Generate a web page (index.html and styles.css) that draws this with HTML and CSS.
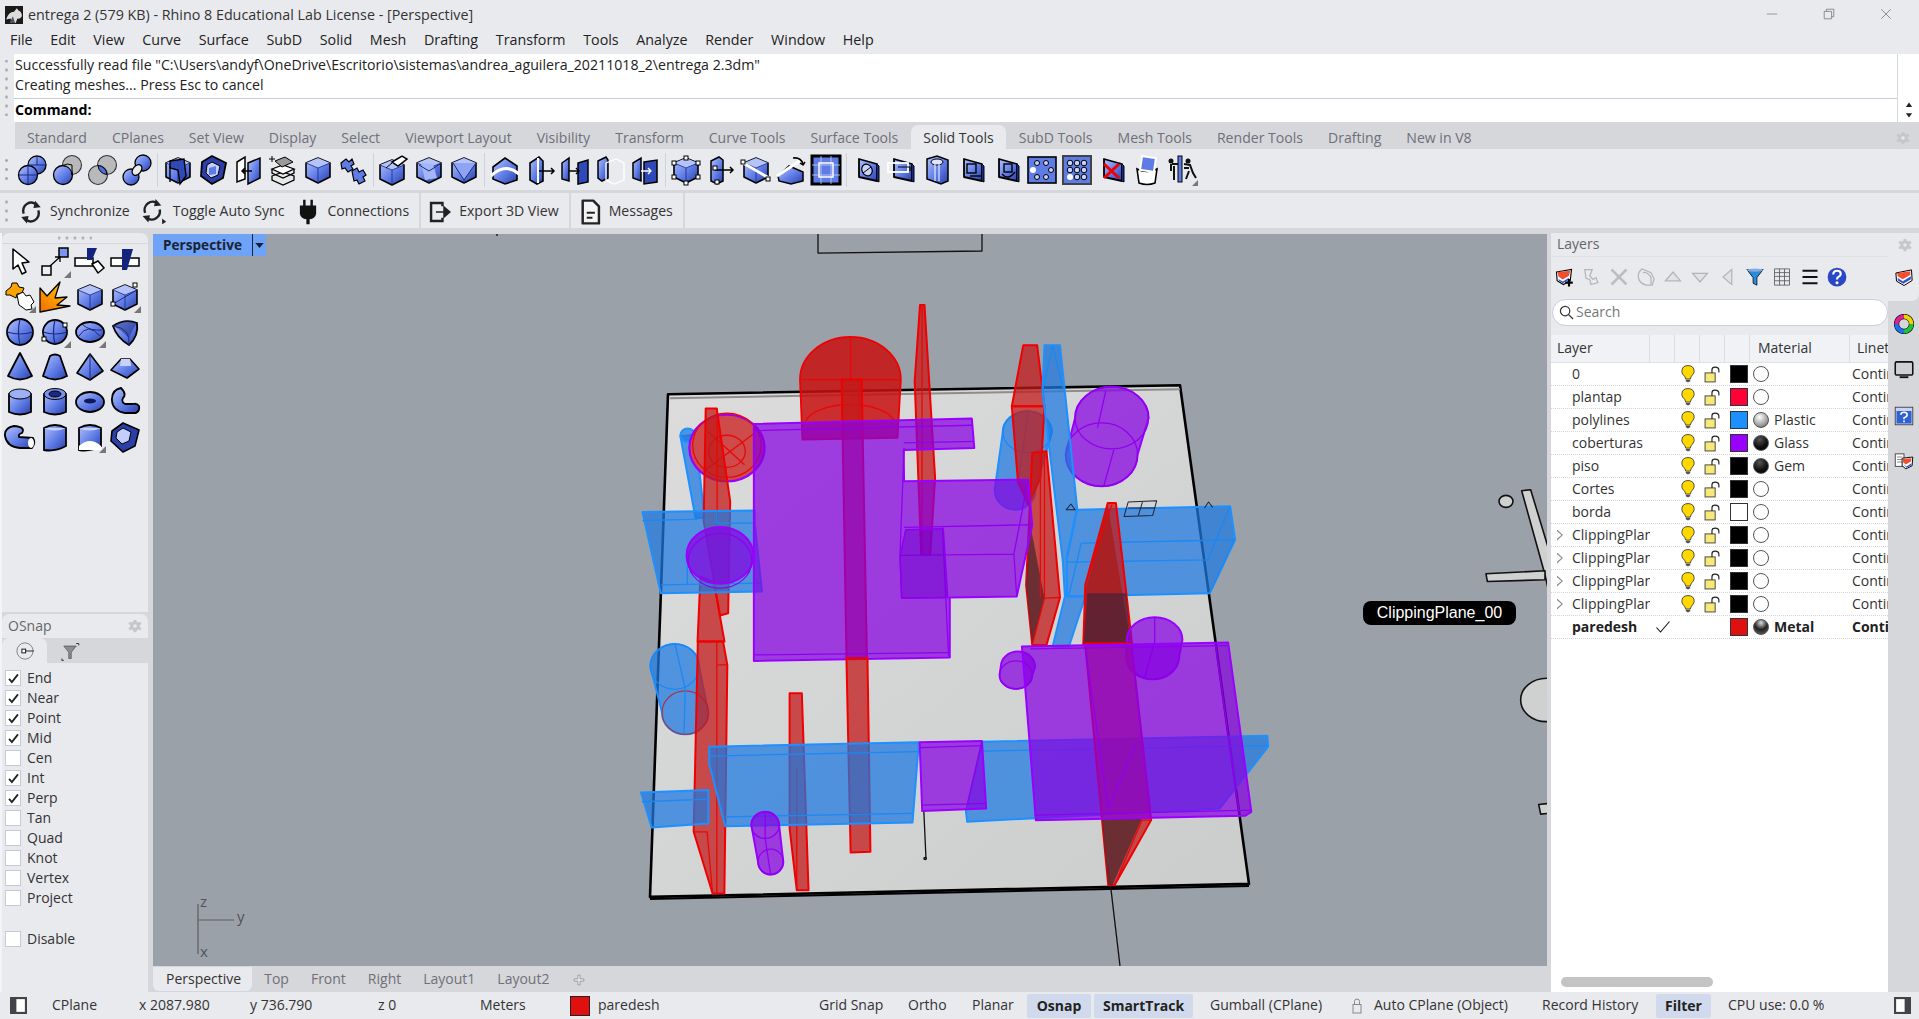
FILE: index.html
```html
<!DOCTYPE html>
<html lang="en">
<head>
<meta charset="utf-8">
<title>entrega 2 - Rhino 8</title>
<link rel="stylesheet" href="styles.css">
</head>
<body>
<svg class="sprite" xmlns="http://www.w3.org/2000/svg">
<defs>
<linearGradient id="bl" x1="0" y1="0" x2="1" y2="1"><stop offset="0" stop-color="#b4c3fa"/><stop offset=".55" stop-color="#5f7ce6"/><stop offset="1" stop-color="#2a40a8"/></linearGradient>
<linearGradient id="or" x1="1" y1="0" x2="0" y2="1"><stop offset="0" stop-color="#ffd400"/><stop offset="1" stop-color="#f56a00"/></linearGradient>
<g id="box"><path d="M16 4 28 9V23L16 29 4 23V9Z" fill="url(#bl)" stroke="#000" stroke-width="1.6" stroke-linejoin="round"/><path d="M4 9 16 14 28 9 16 4Z" fill="#b4c3fa"/><path d="M4 9 16 14 28 9M16 14V29" fill="none" stroke="#1b2a80" stroke-width=".8"/></g>
<g id="flat"><path d="M8 5 26 10V27L8 23Z" fill="url(#bl)" stroke="#000" stroke-width="1.8" stroke-linejoin="round"/><path d="M26 10 28 12V28L26 27" fill="#1b2a80" stroke="#000"/></g>
</defs>
<symbol id="s-union" viewBox="0 0 32 32"><circle cx="21" cy="11" r="9" fill="url(#bl)" stroke="#000" stroke-width="1.3"/><circle cx="12" cy="21" r="9.5" fill="url(#bl)" stroke="#000" stroke-width="1.3"/><path d="M3 21H21M12 11.500V30.500" stroke="#1b2a80" fill="none"/><path d="M21 2V11M12 11H30" stroke="#1b2a80" fill="none"/></symbol>
<symbol id="s-diff" viewBox="0 0 32 32"><circle cx="21" cy="11" r="9.500" fill="#b9b9b9" stroke="#333" stroke-width="1.100"/><circle cx="12" cy="21" r="9.500" fill="url(#bl)" stroke="#000" stroke-width="1.300"/><path d="M21 11A9.500 9.500 0 0 0 12 11.500 9.500 9.500 0 0 1 21 21Z" fill="#b9b9b9" stroke="#000"/></symbol>
<symbol id="s-int" viewBox="0 0 32 32"><circle cx="21" cy="11" r="9.500" fill="#b9b9b9" stroke="#333" stroke-width="1.100"/><circle cx="12" cy="21" r="9.500" fill="#b9b9b9" stroke="#333" stroke-width="1.100"/><path d="M12 11.500A9.500 9.500 0 0 1 21 20.500 9.500 9.500 0 0 1 12 11.500Z" fill="#4f6ce0" stroke="#000"/></symbol>
<symbol id="s-split" viewBox="0 0 32 32"><circle cx="22" cy="9" r="8" fill="url(#bl)" stroke="#000" stroke-width="1.300"/><circle cx="10" cy="23" r="8" fill="url(#bl)" stroke="#000" stroke-width="1.300"/><ellipse cx="16" cy="16" rx="4" ry="6" transform="rotate(40 16 16)" fill="#e9eaee" stroke="#000" stroke-width="1.300"/></symbol>
<symbol id="s-rail" viewBox="0 0 32 32"><use href="#box"/><path d="M8 7 22 5 24 22 18 30 16 16 8 14Z" fill="#2f49b8" stroke="#000" stroke-width="1.400"/><path d="M8 12V28" stroke="#000" stroke-width="1.400"/></symbol>
<symbol id="s-hex" viewBox="0 0 32 32"><path d="M15 2 29 9 26 24 15 30 4 22 5 8Z" fill="#2a40a8" stroke="#000" stroke-width="1.800"/><path d="M15 8 23 12 21 21 14 24 9 19 10 11Z" fill="#c3cffa" stroke="#000"/><path d="M12 14 19 12 19 20 12 21Z" fill="#5f7ce6"/></symbol>
<symbol id="s-cut" viewBox="0 0 32 32"><path d="M5 8 13 3V25L5 28Z" fill="#fff" stroke="#000" stroke-width="1.500"/><path d="M16 9 28 4V24L16 30Z" fill="url(#bl)" stroke="#000" stroke-width="1.500"/><path d="M20 17H10M13 14 10 17 13 20" fill="none" stroke="#000" stroke-width="1.500"/></symbol>
<symbol id="s-stack" viewBox="0 0 32 32"><path d="M5 22 16 18 27 22 27 26 16 31 5 26Z" fill="#e8e8e8" stroke="#000" stroke-width="1.300"/><path d="M5 15 16 11 27 15 16 20Z" fill="#fff" stroke="#000" stroke-width="1.300"/><path d="M5 15V19L16 24 27 19V15" fill="none" stroke="#000" stroke-width="1.300"/><path d="M8 7 18 3 26 8 15 13Z" fill="#999" stroke="#000"/><path d="M5 2V8M2 5H8" stroke="#000"/></symbol>
<symbol id="s-box" viewBox="0 0 32 32"><use href="#box"/></symbol>
<symbol id="s-puz" viewBox="0 0 32 32"><path d="M4 9 9 5 12 8 15 5 17 10 14 12 16 15 11 18 8 14 5 15Z" fill="#5f7ce6" stroke="#000" stroke-width="1.200"/><path d="M15 17 20 14 22 18 26 16 29 21 26 23 28 27 22 30 20 26 17 27Z" fill="#5f7ce6" stroke="#000" stroke-width="1.200"/></symbol>
<symbol id="s-spray" viewBox="0 0 32 32"><use href="#box" transform="translate(-2 2)"/><path d="M14 8 24 2 29 5 20 12Z" fill="#fff" stroke="#000" stroke-width="1.500"/><path d="M8 14 14 9" stroke="#000"/></symbol>
<symbol id="s-facet" viewBox="0 0 32 32"><use href="#box"/><path d="M8 9 20 10 24 24 12 26Z" fill="#a4b6f6"/><path d="M6 11 16 17 27 10" fill="none" stroke="#1b2a80"/></symbol>
<symbol id="s-tri" viewBox="0 0 32 32"><use href="#box"/><path d="M5 9 16 26 28 9" fill="#8ea3f2" stroke="#1b2a80"/></symbol>
<symbol id="s-arc" viewBox="0 0 32 32"><path d="M4 13 16 4 28 12V26L16 30 4 25Z" fill="url(#bl)" stroke="#000" stroke-width="1.600"/><path d="M2 22Q16 8 30 20" fill="none" stroke="#fff" stroke-width="3"/></symbol>
<symbol id="s-push" viewBox="0 0 32 32"><path d="M6 9 15 3 19 7V27L13 30 6 26Z" fill="url(#bl)" stroke="#000" stroke-width="1.600"/><path d="M14 4V29" stroke="#fff" stroke-width="2"/><path d="M15 17H30M27 14 30 17 27 20" fill="none" stroke="#000" stroke-width="1.500"/></symbol>
<symbol id="s-pull" viewBox="0 0 32 32"><path d="M3 9 10 4V27L3 25Z" fill="url(#bl)" stroke="#000" stroke-width="1.500"/><path d="M19 9 29 6V28L19 30Z" fill="#2f49b8" stroke="#000" stroke-width="1.500"/><path d="M10 17H19M17 14 20 17 17 20" fill="none" stroke="#000" stroke-width="1.400"/></symbol>
<symbol id="s-ghost" viewBox="0 0 32 32"><path d="M4 7 12 3 14 6V24L8 27 4 24Z" fill="url(#bl)" stroke="#000" stroke-width="1.500"/><path d="M12 9 22 5 30 9V26L20 30 12 26Z" fill="none" stroke="#fff" stroke-width="1.300"/></symbol>
<symbol id="s-mv" viewBox="0 0 32 32"><path d="M4 9 12 4V27L4 24Z" fill="url(#bl)" stroke="#000" stroke-width="1.500"/><path d="M15 8 28 6V28L15 30Z" fill="#2f49b8" stroke="#000" stroke-width="1.500"/><path d="M12 17H22M19 14 22 17 19 20" fill="none" stroke="#fff" stroke-width="1.400"/></symbol>
<symbol id="s-pts" viewBox="0 0 32 32"><use href="#box"/><g fill="#fff" stroke="#000"><rect x="2" y="7" width="4" height="4"/><rect x="26" y="7" width="4" height="4"/><rect x="14" y="2" width="4" height="4"/><rect x="2" y="21" width="4" height="4"/><rect x="26" y="21" width="4" height="4"/><rect x="14" y="27" width="4" height="4"/></g></symbol>
<symbol id="s-pts2" viewBox="0 0 32 32"><path d="M6 7 14 3 18 6V27L12 30 6 27Z" fill="url(#bl)" stroke="#000" stroke-width="1.500"/><path d="M10 16H28M25 13 28 16 25 19" fill="none" stroke="#000" stroke-width="1.500"/><rect x="8" y="12" width="4" height="4" fill="#fff" stroke="#000"/><rect x="10" y="26" width="4" height="4" fill="#fff" stroke="#000"/></symbol>
<symbol id="s-pts3" viewBox="0 0 32 32"><use href="#box"/><path d="M3 9 29 24" stroke="#fff" stroke-width="3"/><rect x="1" y="6" width="4" height="4" fill="#fff" stroke="#000"/><rect x="26" y="23" width="4" height="4" fill="#fff" stroke="#000"/></symbol>
<symbol id="s-bend" viewBox="0 0 32 32"><path d="M3 22 14 12 28 18V27L16 30 4 27Z" fill="url(#bl)" stroke="#000" stroke-width="1.500"/><path d="M2 22 26 6" stroke="#fff" stroke-width="3"/><path d="M18 4Q26 3 28 10M25 9 28 11 30 8" fill="none" stroke="#000" stroke-width="1.500"/></symbol>
<symbol id="s-grid" viewBox="0 0 32 32"><rect x="2" y="2" width="28" height="28" fill="#5f7ce6" stroke="#000" stroke-width="3"/><path d="M2 11H30M2 21H30M11 2V30M21 2V30" stroke="#c9d3f9" stroke-width=".8"/><rect x="9" y="9" width="14" height="14" fill="none" stroke="#fff" stroke-width="1.500"/></symbol>
<symbol id="s-hole" viewBox="0 0 32 32"><use href="#flat"/><ellipse cx="16" cy="16" rx="5" ry="6" transform="rotate(-30 16 16)" fill="#c9d3f9" stroke="#000" stroke-width="1.200"/><path d="M12 19 20 13" stroke="#000"/></symbol>
<symbol id="s-rect" viewBox="0 0 32 32"><use href="#flat"/><rect x="2" y="9" width="20" height="9" fill="none" stroke="#fff" stroke-width="1.800"/><path d="M12 13H24V17" fill="none" stroke="#000" stroke-width="1.200"/></symbol>
<symbol id="s-cyl" viewBox="0 0 32 32"><path d="M6 5 16 2 27 6V27L20 30 6 25Z" fill="url(#bl)" stroke="#000" stroke-width="1.500"/><ellipse cx="16" cy="8" rx="6" ry="3" fill="#dfe5fc" stroke="#000"/><path d="M14 10V27M18 10V27" stroke="#fff"/></symbol>
<symbol id="s-sq1" viewBox="0 0 32 32"><use href="#flat"/><rect x="11" y="10" width="9" height="9" fill="none" stroke="#000" stroke-width="1.400"/><path d="M14 22H26" stroke="#000" stroke-width="1.400"/></symbol>
<symbol id="s-sq2" viewBox="0 0 32 32"><use href="#flat"/><rect x="13" y="10" width="8" height="8" fill="none" stroke="#000" stroke-width="1.400"/><path d="M11 20Q17 27 24 18" fill="none" stroke="#000" stroke-width="1.400"/></symbol>
<symbol id="s-dots5" viewBox="0 0 32 32"><rect x="2" y="3" width="28" height="26" fill="#5f7ce6" stroke="#000" stroke-width="1.600"/><g fill="#c9d3f9" stroke="#000"><circle cx="11" cy="9" r="2.500"/><circle cx="20" cy="9" r="2.500"/><circle cx="25" cy="16" r="2.500"/><circle cx="11" cy="23" r="2.500"/><circle cx="20" cy="23" r="2.500"/></g><circle cx="7" cy="16" r="3" fill="#fff"/></symbol>
<symbol id="s-dots9" viewBox="0 0 32 32"><rect x="2" y="2" width="28" height="28" fill="#5f7ce6" stroke="#444" stroke-width="2"/><g fill="#c9d3f9" stroke="#000"><circle cx="9" cy="9" r="2.800"/><circle cx="16" cy="9" r="2.800"/><circle cx="23" cy="9" r="2.800"/><circle cx="9" cy="16" r="2.800"/><circle cx="16" cy="16" r="2.800"/><circle cx="23" cy="16" r="2.800"/><circle cx="16" cy="23" r="2.800"/><circle cx="23" cy="23" r="2.800"/></g><circle cx="9" cy="23" r="3" fill="#fff"/></symbol>
<symbol id="s-x" viewBox="0 0 32 32"><use href="#flat"/><path d="M8 10 23 24M23 10 8 24" stroke="#f00000" stroke-width="3"/></symbol>
<symbol id="s-bucket" viewBox="0 0 32 32"><path d="M6 15Q16 20 26 15L24 29Q16 32 8 29Z" fill="#fff" stroke="#000" stroke-width="1.600"/><rect x="10" y="3" width="14" height="14" transform="rotate(8 17 10)" fill="#5f7ce6" stroke="#fff" stroke-width="2"/></symbol>
<symbol id="s-man" viewBox="0 0 32 32"><rect x="12" y="2" width="4" height="26" fill="#5f7ce6" stroke="#000"/><circle cx="5" cy="7" r="2.500" fill="#111"/><circle cx="22" cy="7" r="2.500" fill="#111"/><path d="M6 10H12M5 10V17M8 12V26M18 10 24 11 27 19 30 24M18 14H23M23 17 20 25" fill="none" stroke="#111" stroke-width="2"/><path d="M32 26V32H26Z" fill="#777"/></symbol>
<symbol id="s-cursor" viewBox="0 0 32 32"><path d="M9 3V23L14 19 18 28 22 26 18 17 25 16Z" fill="#fff" stroke="#000" stroke-width="1.500" stroke-linejoin="round"/></symbol>
<symbol id="s-2sq" viewBox="0 0 32 32"><rect x="20" y="2" width="9" height="9" fill="#7b94ef" stroke="#000" stroke-width="1.500"/><rect x="3" y="20" width="9" height="9" fill="#eee" stroke="#000" stroke-width="1.500"/><path d="M11 20 21 11M16 11H21V16" fill="none" stroke="#000" stroke-width="1.300"/></symbol>
<symbol id="s-tw1" viewBox="0 0 32 32"><rect x="1" y="12" width="18" height="8" fill="#fff" stroke="#000" stroke-width="1.500"/><path d="M13 2H23L18 14H13Z" fill="#14247e"/><path d="M18 18 24 15 30 22 24 27Z" fill="#fff" stroke="#000" stroke-width="1.500"/></symbol>
<symbol id="s-tw2" viewBox="0 0 32 32"><rect x="2" y="12" width="28" height="8" fill="#fff" stroke="#000" stroke-width="1.500"/><path d="M13 3H24L18 24H13Z" fill="#14247e"/></symbol>
<symbol id="s-orpuz" viewBox="0 0 32 32"><path d="M2 10 7 6 8 2 13 2 15 6 20 7 18 12 13 13 12 17 6 14 2 14Z" fill="#f9a400" stroke="#000"/><path d="M13 14 19 11 22 15 26 14 30 21 27 24 28 28 22 29 18 26 15 24Z" fill="#fff" stroke="#000"/></symbol>
<symbol id="s-burst" viewBox="0 0 32 32"><path d="M1 31V7L8 15 21 1 16 17 28 16 18 24 31 25 1 31Z" fill="url(#or)" stroke="#000" stroke-width="1.300" stroke-linejoin="round"/></symbol>
<symbol id="s-box2" viewBox="0 0 32 32"><use href="#box"/><path d="M4 23 28 9" stroke="#1b2a80"/><rect x="24" y="2" width="4" height="4" fill="#fff" stroke="#000"/><rect x="2" y="21" width="4" height="4" fill="#fff" stroke="#000"/></symbol>
<symbol id="s-sph" viewBox="0 0 32 32"><circle cx="16" cy="16" r="13" fill="url(#bl)" stroke="#000" stroke-width="1.800"/><path d="M3 16Q16 20 29 16M16 3Q13 16 16 29" fill="none" stroke="#1b2a80" stroke-width="1.200"/></symbol>
<symbol id="s-sph2" viewBox="0 0 32 32"><circle cx="16" cy="16" r="12" fill="url(#bl)" stroke="#000" stroke-width="1.800"/><path d="M4 16Q16 20 28 16M16 4Q13 16 16 28" fill="none" stroke="#1b2a80" stroke-width="1.200"/><rect x="24" y="7" width="4" height="4" fill="#fff" stroke="#000"/><rect x="3" y="21" width="4" height="4" fill="#fff" stroke="#000"/></symbol>
<symbol id="s-ell" viewBox="0 0 32 32"><ellipse cx="16" cy="16" rx="14" ry="10" fill="url(#bl)" stroke="#000" stroke-width="1.800"/><path d="M5 20Q14 6 26 20M9 9Q16 15 28 14" fill="none" stroke="#1b2a80"/></symbol>
<symbol id="s-para" viewBox="0 0 32 32"><path d="M4 10Q16 2 28 7 30 20 20 29 8 22 4 10Z" fill="url(#bl)" stroke="#000" stroke-width="1.800"/><path d="M4 10Q22 12 20 29" fill="none" stroke="#1b2a80"/><path d="M4 10Q16 2 28 7 22 16 20 22 10 12 4 10Z" fill="#1b2a80" opacity=".5"/></symbol>
<symbol id="s-cone" viewBox="0 0 32 32"><path d="M16 2 28 25Q16 32 4 25Z" fill="url(#bl)" stroke="#000" stroke-width="1.800" stroke-linejoin="round"/></symbol>
<symbol id="s-tcone" viewBox="0 0 32 32"><path d="M11 5Q16 2 21 5L28 25Q16 32 4 25Z" fill="url(#bl)" stroke="#000" stroke-width="1.800"/></symbol>
<symbol id="s-pyr" viewBox="0 0 32 32"><path d="M16 3 29 20 16 29 3 22Z" fill="url(#bl)" stroke="#000" stroke-width="1.600" stroke-linejoin="round"/><path d="M16 3 16 29" stroke="#1b2a80"/></symbol>
<symbol id="s-tpyr" viewBox="0 0 32 32"><path d="M12 8H21L30 18 18 27 2 19Z" fill="url(#bl)" stroke="#000" stroke-width="1.600" stroke-linejoin="round"/><path d="M12 8 11 15H22L21 8Z" fill="#c9d3f9"/></symbol>
<symbol id="s-can" viewBox="0 0 32 32"><path d="M5 8Q16 2 27 8V26Q16 31 5 26Z" fill="url(#bl)" stroke="#000" stroke-width="1.800"/><ellipse cx="16" cy="8" rx="11" ry="5" fill="#9db0f5" stroke="#000"/></symbol>
<symbol id="s-pipe" viewBox="0 0 32 32"><path d="M5 8Q16 2 27 8V26Q16 31 5 26Z" fill="url(#bl)" stroke="#000" stroke-width="1.800"/><ellipse cx="16" cy="8" rx="11" ry="5.500" fill="#7b94ef" stroke="#000"/><ellipse cx="16" cy="8" rx="6" ry="3" fill="#1b2a80" stroke="#000"/></symbol>
<symbol id="s-tor" viewBox="0 0 32 32"><ellipse cx="16" cy="16" rx="14" ry="10" fill="url(#bl)" stroke="#000" stroke-width="1.800"/><ellipse cx="16" cy="15" rx="6" ry="2.500" fill="#10185c"/></symbol>
<symbol id="s-hook" viewBox="0 0 32 32"><path d="M12 2Q2 4 3 15 4 25 16 27H27Q31 25 30 20 28 17 24 18L16 18Q12 16 14 12 18 8 12 2Z" fill="url(#bl)" stroke="#000" stroke-width="1.800" stroke-linejoin="round"/></symbol>
<symbol id="s-pipeh" viewBox="0 0 32 32"><path d="M10 5Q0 7 1 15 3 26 16 27H28Q32 22 29 17L15 16Q14 13 18 12 22 6 10 5Z" fill="url(#bl)" stroke="#000" stroke-width="1.800" stroke-linejoin="round"/><ellipse cx="27" cy="22" rx="3" ry="5" fill="#fff"/></symbol>
<symbol id="s-srf" viewBox="0 0 32 32"><path d="M5 7Q16 1 27 7V25Q16 31 5 29Z" fill="url(#bl)" stroke="#000" stroke-width="1.800"/><path d="M5 7Q16 12 27 7" fill="#c9d3f9"/></symbol>
<symbol id="s-srf2" viewBox="0 0 32 32"><path d="M5 7Q16 1 27 7V25Q16 31 5 29Z" fill="url(#bl)" stroke="#000" stroke-width="1.800"/><path d="M5 25Q16 15 27 25V29H5Z" fill="#fff"/><path d="M5 7Q16 12 27 7" fill="#c9d3f9"/></symbol>
<symbol id="s-sol" viewBox="0 0 32 32"><path d="M14 2 30 9 26 25 14 31 2 20 3 10Z" fill="#2a40a8" stroke="#000" stroke-width="1.600"/><path d="M14 7 22 11 20 20 13 23 7 17 8 11Z" fill="#c3cffa" stroke="#000"/></symbol>
<symbol id="s-gear" viewBox="0 0 32 32"><path d="M13 2H19L20 6 24 8 28 6 31 11 27 14V18L31 21 28 26 24 24 20 26 19 30H13L12 26 8 24 4 26 1 21 5 18V14L1 11 4 6 8 8 12 6Z" fill="#c6c7cb"/><circle cx="16" cy="16" r="4" fill="#e9eaee"/></symbol>
<symbol id="s-sync" viewBox="0 0 32 32"><path d="M7 18A10 10 0 0 1 24 8M25 14A10 10 0 0 1 8 24" fill="none" stroke="#222" stroke-width="3"/><path d="M21 2 28 10 19 11ZM11 30 4 22 13 21Z" fill="#222"/></symbol>
<symbol id="s-sync2" viewBox="0 0 32 32"><path d="M5 17A10 10 0 0 1 21 6M23 13A10 10 0 0 1 7 23" fill="none" stroke="#222" stroke-width="3"/><path d="M18 0 25 8 16 9ZM9 29 2 21 11 20ZM26 24 31 28 26 31Z" fill="#222"/></symbol>
<symbol id="s-plug" viewBox="0 0 32 32"><path d="M10 1H13V8H19V1H22V8H26V18Q25 24 18 25V31H14V25Q7 24 6 18V8H10Z" fill="#111"/></symbol>
<symbol id="s-export" viewBox="0 0 32 32"><path d="M19 9V5H5V27H19V23" fill="none" stroke="#222" stroke-width="3"/><path d="M11 16H25M21 10 28 16 21 22Z" fill="#222" stroke="#222" stroke-width="2"/></symbol>
<symbol id="s-doc" viewBox="0 0 32 32"><path d="M7 2H20L27 9V30H7Z" fill="#f3f3f5" stroke="#222" stroke-width="3" stroke-linejoin="round"/><path d="M12 17H22M12 23H19" stroke="#222" stroke-width="2.500"/></symbol>
<symbol id="s-logo" viewBox="0 0 32 32"><rect width="32" height="32" fill="#1a1a1a"/><path d="M2 24Q6 10 16 10L21 4 24 8Q30 10 30 18 26 24 22 22L19 30H12L10 22Z" fill="#ddd"/><path d="M8 30 14 18 18 30Z" fill="#555"/></symbol>
<symbol id="s-newl" viewBox="0 0 32 32"><path d="M4 8 28 4 26 22 15 28 5 22Z" fill="#fff" stroke="#000" stroke-width="1.800"/><path d="M6 8 26 6 24 14 14 20 7 15Z" fill="#f05030"/><path d="M7 19 14 23 24 17 23 21 14 26 8 22Z" fill="#3355cc"/><path d="M24 19V31M18 25H30" stroke="#000" stroke-width="3.400"/></symbol>
<symbol id="s-layer" viewBox="0 0 32 32"><path d="M3 8 28 3 29 20 16 28 4 21Z" fill="#fff" stroke="#000" stroke-width="1.600"/><path d="M5 8 26 5 26 11 14 18 6 13Z" fill="#f05030"/><path d="M6 16 14 21 27 13 27 18 15 25 6 20Z" fill="#3355cc"/></symbol>
<symbol id="s-del" viewBox="0 0 32 32"><path d="M4 4 28 28M28 4 4 28" stroke="#bcbdc2" stroke-width="4"/></symbol>
<symbol id="s-gly" viewBox="0 0 32 32"><path d="M6 4H18L14 14 19 20 24 17 27 25 16 28 14 20 8 18Z" fill="none" stroke="#b4b5ba" stroke-width="2"/></symbol>
<symbol id="s-gly2" viewBox="0 0 32 32"><path d="M10 3Q2 8 4 18 6 26 16 29H26L29 19 24 9Z" fill="#e9eaee" stroke="#b4b5ba" stroke-width="2"/><path d="M11 9Q18 7 24 17V28" fill="none" stroke="#b4b5ba" stroke-width="2"/></symbol>
<symbol id="s-up" viewBox="0 0 32 32"><path d="M4 22 16 8 28 22Z" fill="#e2e3e7" stroke="#b4b5ba" stroke-width="2"/></symbol>
<symbol id="s-down" viewBox="0 0 32 32"><path d="M4 10 16 24 28 10Z" fill="#e2e3e7" stroke="#b4b5ba" stroke-width="2"/></symbol>
<symbol id="s-left" viewBox="0 0 32 32"><path d="M22 4 8 16 22 28Z" fill="#e2e3e7" stroke="#b4b5ba" stroke-width="2"/></symbol>
<symbol id="s-fun" viewBox="0 0 32 32"><path d="M3 4H29L19 17V29L13 26V17Z" fill="#2a8bd8" stroke="#123" stroke-width="1.500" stroke-linejoin="round"/><ellipse cx="16" cy="5" rx="13" ry="2.500" fill="#8ad"/></symbol>
<symbol id="s-tbl" viewBox="0 0 32 32"><path d="M4 3H28V29H4ZM4 9H28M4 15H28M4 22H28M12 3V29M20 3V29" fill="none" stroke="#555" stroke-width="1.300"/></symbol>
<symbol id="s-menu" viewBox="0 0 32 32"><path d="M4 6H28M4 16H28M4 26H28" stroke="#111" stroke-width="3.400"/></symbol>
<symbol id="s-help" viewBox="0 0 32 32"><circle cx="16" cy="16" r="15" fill="#2a47c8"/><path d="M10 12Q10 6 16 6 22 6 22 11 22 14 18 16 16 17 16 20" fill="none" stroke="#fff" stroke-width="3.400"/><circle cx="16" cy="25" r="2.400" fill="#fff"/></symbol>
<symbol id="s-search" viewBox="0 0 32 32"><circle cx="13" cy="13" r="10" fill="none" stroke="#333" stroke-width="2.600"/><path d="M20 20 30 30" stroke="#333" stroke-width="2.800"/></symbol>
<symbol id="s-bulb" viewBox="0 0 32 32"><path d="M16 1Q27 1 27 12 26 16 22 20L20 25H12L10 20Q5 16 5 12 5 1 16 1Z" fill="#ffd800" stroke="#333" stroke-width="1.500"/><path d="M12 26H20V29L16 31 12 29Z" fill="#555"/></symbol>
<symbol id="s-lock" viewBox="0 0 32 32"><rect x="2" y="13" width="19" height="17" fill="#f8e878" stroke="#444" stroke-width="1.800"/><path d="M15 13V7Q15 2 21 2 28 2 28 8V12" fill="none" stroke="#222" stroke-width="2.200"/></symbol>
<symbol id="s-wheel" viewBox="0 0 32 32"><circle cx="16" cy="16" r="12" fill="none" stroke="#111" stroke-width="8.500"/><path d="M16 4A12 12 0 0 1 28 16" fill="none" stroke="#f2d200" stroke-width="6.500"/><path d="M28 16A12 12 0 0 1 16 28" fill="none" stroke="#22c040" stroke-width="6.500"/><path d="M16 28A12 12 0 0 1 4 16" fill="none" stroke="#1f6ff0" stroke-width="6.500"/><path d="M4 16A12 12 0 0 1 16 4" fill="none" stroke="#e0208f" stroke-width="6.500"/></symbol>
<symbol id="s-mon" viewBox="0 0 32 32"><rect x="2" y="3" width="28" height="21" rx="2" fill="#d0d0d4" stroke="#111" stroke-width="2.500"/><path d="M9 29H23V26H9Z" fill="#111"/></symbol>
<symbol id="s-hwin" viewBox="0 0 32 32"><rect x="2" y="2" width="28" height="28" fill="#c9d3f9" stroke="#444" stroke-width="1.500"/><rect x="4" y="8" width="24" height="20" fill="#2f62d0"/><path d="M11 14Q11 10 16 10 21 10 21 14 21 17 16 19V21M16 23V26" fill="none" stroke="#fff" stroke-width="2.500"/></symbol>
<symbol id="s-lnote" viewBox="0 0 32 32"><rect x="2" y="3" width="14" height="20" fill="#fff" stroke="#444" stroke-width="1.500"/><path d="M5 8H13M5 12H13M5 16H13" stroke="#444"/><path d="M13 10 30 8 29 22 19 27 13 22Z" fill="#fff" stroke="#000" stroke-width="1.500"/><path d="M14 11 28 10 27 15 19 20 14 16Z" fill="#f05030"/><path d="M15 19 20 23 28 18 28 21 20 25Z" fill="#3355cc"/></symbol>
<symbol id="s-snap" viewBox="0 0 32 32"><circle cx="16" cy="16" r="13" fill="none" stroke="#777" stroke-width="1.400"/><rect x="11" y="13" width="6" height="6" fill="#fff" stroke="#111" stroke-width="1.500"/><path d="M17 16H30" stroke="#111" stroke-width="1.400"/></symbol>
<symbol id="s-fsnap" viewBox="0 0 32 32"><path d="M6 8H26L18 18V28H14V18Z" fill="#8c8d92" stroke="#444"/><path d="M3 28V31H6M26 4H30V7M3 7" fill="none" stroke="#333" stroke-width="1.600"/></symbol>
<symbol id="s-check" viewBox="0 0 32 32"><path d="M5 17 12 25 27 6" fill="none" stroke="#222" stroke-width="4.500"/></symbol>
<symbol id="s-tick" viewBox="0 0 32 32"><path d="M3 17 11 26 29 5" fill="none" stroke="#111" stroke-width="2.200"/></symbol>
<symbol id="s-padlock" viewBox="0 0 32 32"><rect x="8" y="13" width="16" height="17" fill="#e9eaee" stroke="#888" stroke-width="2"/><path d="M11 13V7Q11 2 16 2 21 2 21 7V13" fill="none" stroke="#888" stroke-width="2"/></symbol>
<symbol id="s-toggle" viewBox="0 0 32 32"><rect x="2" y="2" width="28" height="28" fill="#fff" stroke="#444" stroke-width="4"/><rect x="2" y="2" width="10" height="28" fill="#444"/></symbol>
<symbol id="s-toggle2" viewBox="0 0 32 32"><rect x="2" y="2" width="28" height="28" fill="#fff" stroke="#444" stroke-width="4"/><rect x="20" y="2" width="10" height="28" fill="#444"/></symbol>
<symbol id="s-plus" viewBox="0 0 32 32"><path d="M13 3H19V13H29V19H19V29H13V19H3V13H13Z" fill="#e4e5e8" stroke="#888" stroke-width="1.800"/></symbol>
<symbol id="s-min" viewBox="0 0 32 32"><path d="M4 16H28" stroke="#777" stroke-width="1.600"/></symbol>
<symbol id="s-rest" viewBox="0 0 32 32"><path d="M5 10H22V27H5ZM10 10V5H27V22H22" fill="none" stroke="#777" stroke-width="1.800"/></symbol>
<symbol id="s-close" viewBox="0 0 32 32"><path d="M5 5 27 27M27 5 5 27" stroke="#777" stroke-width="1.800"/></symbol>
<symbol id="s-up2" viewBox="0 0 32 32"><path d="M6 22 16 8 26 22Z" fill="#222"/></symbol>
<symbol id="s-dn2" viewBox="0 0 32 32"><path d="M6 10 16 24 26 10Z" fill="#222"/></symbol>
</svg>

<header class="titlebar">
  <svg class="logo"><use href="#s-logo"/></svg>
  <span class="title">entrega 2 (579 KB) - Rhino 8 Educational Lab License - [Perspective]</span>
  <span class="winbtns">
    <svg class="winbtn"><use href="#s-min"/></svg>
    <svg class="winbtn"><use href="#s-rest"/></svg>
    <svg class="winbtn"><use href="#s-close"/></svg>
  </span>
</header>
<nav class="menubar">
  <span>File</span><span>Edit</span><span>View</span><span>Curve</span><span>Surface</span><span>SubD</span><span>Solid</span><span>Mesh</span><span>Drafting</span><span>Transform</span><span>Tools</span><span>Analyze</span><span>Render</span><span>Window</span><span>Help</span>
</nav>
<section class="cmd">
  <div class="grip"></div>
  <div class="cmd-main">
    <div class="cmd-hist">
      <div>Successfully read file "C:\Users\andyf\OneDrive\Escritorio\sistemas\andrea_aguilera_20211018_2\entrega 2.3dm"</div>
      <div>Creating meshes... Press Esc to cancel</div>
    </div>
    <div class="cmd-line">Command:</div>
  </div>
  <div class="cmd-scroll">
    <svg class="cmd-ar"><use href="#s-up2"/></svg>
    <svg class="cmd-ar"><use href="#s-dn2"/></svg>
  </div>
</section>
<section class="tabband">
  <div class="gut"></div>
  <div class="tabs">
    <span class="tab">Standard</span><span class="tab">CPlanes</span><span class="tab">Set View</span><span class="tab">Display</span><span class="tab">Select</span><span class="tab">Viewport Layout</span><span class="tab">Visibility</span><span class="tab">Transform</span><span class="tab">Curve Tools</span><span class="tab">Surface Tools</span><span class="tab tab-on">Solid Tools</span><span class="tab">SubD Tools</span><span class="tab">Mesh Tools</span><span class="tab">Render Tools</span><span class="tab">Drafting</span><span class="tab">New in V8</span>
  </div>
  <svg class="band-gear"><use href="#s-gear"/></svg>
</section>
<section class="iconrow">
  <div class="grip"></div>
  <div class="tools">
    <svg class="tool"><use href="#s-union"/></svg><svg class="tool"><use href="#s-diff"/></svg><svg class="tool"><use href="#s-int"/></svg><svg class="tool"><use href="#s-split"/></svg>
    <i class="sep"></i>
    <svg class="tool"><use href="#s-rail"/></svg><svg class="tool"><use href="#s-hex"/></svg><svg class="tool"><use href="#s-cut"/></svg><svg class="tool"><use href="#s-stack"/></svg><svg class="tool"><use href="#s-box"/></svg><svg class="tool"><use href="#s-puz"/></svg>
    <i class="sep"></i>
    <svg class="tool"><use href="#s-spray"/></svg><svg class="tool"><use href="#s-facet"/></svg><svg class="tool"><use href="#s-tri"/></svg>
    <i class="sep"></i>
    <svg class="tool"><use href="#s-arc"/></svg><svg class="tool"><use href="#s-push"/></svg><svg class="tool"><use href="#s-pull"/></svg><svg class="tool"><use href="#s-ghost"/></svg><svg class="tool"><use href="#s-mv"/></svg>
    <i class="sep"></i>
    <svg class="tool"><use href="#s-pts"/></svg><svg class="tool"><use href="#s-pts2"/></svg><svg class="tool"><use href="#s-pts3"/></svg><svg class="tool"><use href="#s-bend"/></svg><svg class="tool"><use href="#s-grid"/></svg>
    <i class="sep"></i>
    <svg class="tool"><use href="#s-hole"/></svg><svg class="tool"><use href="#s-rect"/></svg><svg class="tool"><use href="#s-cyl"/></svg><svg class="tool"><use href="#s-sq1"/></svg><svg class="tool"><use href="#s-sq2"/></svg><svg class="tool"><use href="#s-dots5"/></svg><svg class="tool"><use href="#s-dots9"/></svg><svg class="tool"><use href="#s-x"/></svg><svg class="tool"><use href="#s-bucket"/></svg><svg class="tool"><use href="#s-man"/></svg>
  </div>
</section>
<section class="syncrow">
  <div class="grip"></div>
  <div class="sync-group sync-first">
    <span class="sync-item"><svg class="sync-ic"><use href="#s-sync"/></svg>Synchronize</span>
    <span class="sync-item"><svg class="sync-ic"><use href="#s-sync2"/></svg>Toggle Auto Sync</span>
    <span class="sync-item"><svg class="sync-ic"><use href="#s-plug"/></svg>Connections</span>
  </div>
  <div class="sync-group"><span class="sync-item"><svg class="sync-ic"><use href="#s-export"/></svg>Export 3D View</span></div>
  <div class="sync-group"><span class="sync-item"><svg class="sync-ic"><use href="#s-doc"/></svg>Messages</span></div>
</section>

<main class="main">
  <aside class="leftcol">
    <div class="panel toolpanel">
      <div class="hgrip"></div>
      <div class="sidegrid">
        <span class="cell"><svg class="tool"><use href="#s-cursor"/></svg></span>
        <span class="cell fly"><svg class="tool"><use href="#s-2sq"/></svg></span>
        <span class="cell"><svg class="tool"><use href="#s-tw1"/></svg></span>
        <span class="cell"><svg class="tool"><use href="#s-tw2"/></svg></span>
        <span class="cell fly"><svg class="tool"><use href="#s-orpuz"/></svg></span>
        <span class="cell"><svg class="tool"><use href="#s-burst"/></svg></span>
        <span class="cell"><svg class="tool"><use href="#s-box"/></svg></span>
        <span class="cell fly"><svg class="tool"><use href="#s-box2"/></svg></span>
        <span class="cell"><svg class="tool"><use href="#s-sph"/></svg></span>
        <span class="cell fly"><svg class="tool"><use href="#s-sph2"/></svg></span>
        <span class="cell fly"><svg class="tool"><use href="#s-ell"/></svg></span>
        <span class="cell"><svg class="tool"><use href="#s-para"/></svg></span>
        <span class="cell"><svg class="tool"><use href="#s-cone"/></svg></span>
        <span class="cell"><svg class="tool"><use href="#s-tcone"/></svg></span>
        <span class="cell"><svg class="tool"><use href="#s-pyr"/></svg></span>
        <span class="cell"><svg class="tool"><use href="#s-tpyr"/></svg></span>
        <span class="cell"><svg class="tool"><use href="#s-can"/></svg></span>
        <span class="cell"><svg class="tool"><use href="#s-pipe"/></svg></span>
        <span class="cell"><svg class="tool"><use href="#s-tor"/></svg></span>
        <span class="cell"><svg class="tool"><use href="#s-hook"/></svg></span>
        <span class="cell"><svg class="tool"><use href="#s-pipeh"/></svg></span>
        <span class="cell"><svg class="tool"><use href="#s-srf"/></svg></span>
        <span class="cell fly"><svg class="tool"><use href="#s-srf2"/></svg></span>
        <span class="cell"><svg class="tool"><use href="#s-sol"/></svg></span>
      </div>
    </div>
    <div class="panel osnap">
      <div class="osnap-head"><span>OSnap</span><svg class="gear"><use href="#s-gear"/></svg></div>
      <div class="osnap-tabs">
        <span class="otab otab-on"><svg class="otab-ic"><use href="#s-snap"/></svg></span>
        <span class="otab"><svg class="otab-ic"><use href="#s-fsnap"/></svg></span>
      </div>
      <ul class="snaps">
        <li><span class="cb"><svg class="cbm"><use href="#s-check"/></svg></span>End</li>
        <li><span class="cb"><svg class="cbm"><use href="#s-check"/></svg></span>Near</li>
        <li><span class="cb"><svg class="cbm"><use href="#s-check"/></svg></span>Point</li>
        <li><span class="cb"><svg class="cbm"><use href="#s-check"/></svg></span>Mid</li>
        <li><span class="cb"></span>Cen</li>
        <li><span class="cb"><svg class="cbm"><use href="#s-check"/></svg></span>Int</li>
        <li><span class="cb"><svg class="cbm"><use href="#s-check"/></svg></span>Perp</li>
        <li><span class="cb"></span>Tan</li>
        <li><span class="cb"></span>Quad</li>
        <li><span class="cb"></span>Knot</li>
        <li><span class="cb"></span>Vertex</li>
        <li><span class="cb"></span>Project</li>
        <li class="snap-gap"><span class="cb"></span>Disable</li>
      </ul>
    </div>
  </aside>

  <div class="centre">
    <div class="viewport">
      <svg class="scene" viewBox="153 233 1394 731" preserveAspectRatio="none" xmlns="http://www.w3.org/2000/svg">
        <defs><linearGradient id="fl" x1="0" y1="0" x2="1" y2="1"><stop offset="0" stop-color="#dcdcdc"/><stop offset="1" stop-color="#cbcdcd"/></linearGradient></defs>
        <path class="wire" d="M818 233V252L982 250V233"/>
        <path class="wire" d="M497 233V235"/>
        <g transform="translate(1300 460) scale(.33333)">
          <ellipse class="out" cx="618" cy="120" rx="21" ry="18"/>
          <path class="out" d="M665 88 692 85 745 260V385L735 340Z"/>
          <path class="out" d="M558 337 735 328V355L562 360Z"/>
          <ellipse class="out" cx="740" cy="715" rx="78" ry="65"/>
          <path class="out" d="M716 1028 745 1025V1055L722 1057Z"/>
        </g>
        <path class="floor" d="M668 393 1180 384 1249 882 650 895Z"/>
        <path class="floor-in" d="M670 397 1180 388"/>
        <path class="floor-edge" d="M650 897 1249 884"/>
        <path class="wire" d="M1108 862 1120 964"/>
        <g transform="translate(620 290) scale(.40816 .33333)">
          <path class="b" d="M148 435 185 430 207 680 185 680Z"/><ellipse class="b" cx="166" cy="432" rx="18" ry="20"/>
          <path class="rd" d="M441 265A123 127 0 0 1 688 265L680 440 447 445Z"/>
          <path class="lr" d="M441 265H688M565 140V265M543 265 545 390M585 265V390M455 390A110 60 0 0 1 672 390"/>
          <path class="r" d="M543 265H592L605 1100H555Z"/>
          <path class="r" d="M735 42H746L772 560 760 790H738L722 270Z"/>
          <path class="lr" d="M740 42V790"/>
          <ellipse class="cyl-r" cx="262" cy="470" rx="92" ry="100"/>
          <path class="lr" d="M205 540 330 425M215 420 305 520"/><ellipse class="lr" cx="262" cy="480" rx="45" ry="48"/><ellipse class="lr" cx="262" cy="462" rx="84" ry="96"/>
          <path class="r" d="M210 352H237L270 630 265 965 245 972 205 690Z"/>
          <path class="lr" d="M238 350V700"/>
          <path class="r" d="M197 855 230 872 256 1050H190Z"/>
          <path class="b" d="M55 662 330 657V695L348 900 100 905 60 690Z"/>
          <path class="lb" d="M55 688 190 683M237 660V695M237 695H330M100 880 348 875M165 780V880"/>
          <path class="b" d="M938 422A60 62 0 0 1 1058 422L1018 595A50 60 0 0 1 918 595Z"/>
          <ellipse class="lb" cx="998" cy="422" rx="60" ry="62"/>
          <path class="lb" d="M1000 360 975 580"/>
          <path class="p" d="M1115 380A90 93 0 0 1 1295 380L1268 490A88 95 0 0 1 1092 490Z"/>
          <ellipse class="lp" cx="1180" cy="490" rx="88" ry="95"/>
          <ellipse class="lp" cx="1205" cy="380" rx="90" ry="93"/>
          <path class="lp" d="M1190 300 1170 410M1210 475 1185 585"/>
          <ellipse class="p" cx="245" cy="792" rx="82" ry="85"/>
          <ellipse class="lp" cx="245" cy="808" rx="78" ry="82"/>
          <path class="r" d="M988 162H1022L1040 345H960Z"/>
          <path class="r" d="M960 345H1040L1030 560 1000 640 975 570Z"/>
          <path class="b" d="M1040 162H1078L1120 650 1095 800V915H1140L1100 1065H1060L1090 915 1085 810 1035 300Z"/>
          <path class="lb" d="M1060 162 1035 300M1060 162 1085 290"/>
          <path class="b" d="M1120 655 1495 645 1507 745 1445 905 1095 915 1095 790Z"/>
          <path class="lb" d="M1130 755 1505 745M1095 812 1440 805M1495 645 1440 805M1505 745 1445 905M1130 755 1100 910"/>
          <path class="r" d="M1010 485 1045 480 1078 918 1045 1060H1010L995 880Z"/>
          <path class="dk" d="M1005 700 1040 920 1010 1060 995 880Z"/>
          <path class="lr" d="M1040 480 1040 920 1078 918M1040 920 1010 1060M1030 480V920"/>
          <path class="dk" d="M1195 640 1138 910V1062H1252Z"/>
          <path class="r" d="M1195 635H1215L1255 1060H1135L1140 880Z"/>
          <path class="lr" d="M1140 880 1205 640M1170 750 1195 640"/>
          <path class="bk" d="M1145 905H1240L1252 1062H1135Z"/>
          <path class="lk" d="M1105 638 1093 655H1115Z"/>
          <path class="lk" d="M1245 632 1315 628 1305 672 1235 675ZM1280 632 1270 672M1245 650H1310M1432 650 1442 632 1452 648"/>
          <path class="p" d="M328 398 862 382 868 470 695 476 696 570 1000 565 1010 702 972 915 808 918 808 1098 328 1108Z"/>
          <path class="lp" d="M328 418 862 402M695 455 866 450M696 708 1008 700M686 792 965 788M965 788 1000 565M965 788 972 915M328 1090 808 1083M696 470 686 790 690 920 805 918M790 708 805 1095"/>
          <path class="pd" d="M700 715 792 712 803 918 690 920 686 795Z"/>
          <path class="p" d="M1242 1045A68 68 0 0 1 1378 1045L1370 1095A65 68 0 0 1 1240 1095Z"/>
          <path class="lp" d="M1310 977V1050L1285 1160"/>
          <path class="p" d="M933 1125A42 45 0 0 1 1017 1125L1010 1150A40 42 0 0 1 930 1150Z"/>
          <ellipse class="lp" cx="970" cy="1150" rx="40" ry="42"/>
        </g>
        <g transform="translate(620 640) scale(.42088 .33333)">
          <path class="b" d="M72 75A58 68 0 0 1 188 75L210 213A55 65 0 0 1 100 213Z"/>
          <ellipse class="lb" cx="130" cy="75" rx="58" ry="68"/>
          <ellipse class="lrd" cx="155" cy="213" rx="55" ry="65"/>
          <path class="lb" d="M130 5 155 140 152 275"/>
          <path class="r" d="M185 0H245L255 70 248 755H220L175 570Z"/>
          <path class="lr" d="M230 0V755M232 70H255M175 570H207L220 755"/>
          <path class="r" d="M403 155H432L448 745H420L403 560Z"/>
          <path class="lr" d="M420 380V745M403 550H445M403 520H445"/>
          <path class="r" d="M538 50H588L595 630 548 632Z"/>
          <path class="lr" d="M548 515H595"/>
          <path class="b" d="M50 452 210 445V545L75 557Z"/>
          <path class="lb" d="M52 480 210 472"/>
          <path class="b" d="M212 315 710 302 695 542 250 553 212 365Z"/>
          <path class="lb" d="M212 343 708 330M250 525 695 515"/>
          <path class="b" d="M860 300 1538 282 1540 315 1425 500 825 540 822 510Z"/>
          <path class="lb" d="M860 328 1538 312"/>
          <path class="p" d="M312 550A33 40 0 0 1 378 550L388 660A30 38 0 0 1 328 660Z"/>
          <ellipse class="lp" cx="345" cy="550" rx="33" ry="40"/>
          <ellipse class="lp" cx="358" cy="660" rx="30" ry="38"/>
          <path class="lp" d="M345 510V590L358 700"/>
          <path class="p" d="M712 302 860 298 870 500 718 508Z"/>
          <path class="lp" d="M714 318 860 312M718 490 870 485M860 300 825 490"/>
          <path class="wire" d="M722 510 727 650"/>
          <circle class="wire" cx="725" cy="650" r="3"/>
          <path class="r" d="M1105 5H1215L1262 535 1175 730H1160L1145 530Z"/>
          <path class="dk" d="M1145 530H1240L1170 730H1160Z"/>
          <path class="lr" d="M1240 535H1262M1240 535 1175 730"/>
          <path class="p" d="M955 15 1445 3 1500 510 1485 522 988 535Z"/>
          <path class="lp" d="M975 22 1445 12M985 520 1500 505M1415 10 1470 505M1215 10 1260 530M1105 15 1160 500 1225 310"/>
        </g>
      </svg>
      <div class="vp-tab"><b class="vp-name">Perspective</b><svg class="vp-caret" viewBox="0 0 10 6"><path d="M0 0H10L5 6Z"/></svg></div>
      <svg class="axes" viewBox="0 0 60 66"><path d="M7 3V53M7 19H43" /></svg>
      <span class="ax ax-z">z</span><span class="ax ax-y">y</span><span class="ax ax-x">x</span>
      <div class="tooltip">ClippingPlane_00</div>
    </div>
    <div class="vptabs">
      <span class="vpt vpt-on">Perspective</span><span class="vpt">Top</span><span class="vpt">Front</span><span class="vpt">Right</span><span class="vpt">Layout1</span><span class="vpt">Layout2</span>
      <svg class="vpt-plus"><use href="#s-plus"/></svg>
    </div>
  </div>

  <aside class="rightcol">
    <div class="layers">
      <div class="lay-head"><span>Layers</span><svg class="gear"><use href="#s-gear"/></svg></div>
      <div class="lay-tools">
        <svg class="lt"><use href="#s-newl"/></svg><svg class="lt"><use href="#s-gly"/></svg><svg class="lt"><use href="#s-del"/></svg><svg class="lt"><use href="#s-gly2"/></svg><svg class="lt"><use href="#s-up"/></svg><svg class="lt"><use href="#s-down"/></svg><svg class="lt"><use href="#s-left"/></svg><svg class="lt"><use href="#s-fun"/></svg><svg class="lt"><use href="#s-tbl"/></svg><svg class="lt"><use href="#s-menu"/></svg><svg class="lt"><use href="#s-help"/></svg>
      </div>
      <div class="lay-search"><svg class="search-ic"><use href="#s-search"/></svg><span>Search</span></div>
      <div class="lay-table">
        <div class="row head"><span class="c-name">Layer</span><span class="c-chk"></span><span class="c-on"></span><span class="c-lock"></span><span class="c-col"></span><span class="c-mat">Material</span><span class="c-lt">Linetype</span></div>
        <div class="row"><span class="c-name"><i class="ind"></i>0</span><span class="c-chk"></span><span class="c-on"><svg class="bulb"><use href="#s-bulb"/></svg></span><span class="c-lock"><svg class="lock"><use href="#s-lock"/></svg></span><span class="c-col"><i class="sw sw-k"></i></span><span class="c-mat"><i class="mc"></i></span><span class="c-lt">Continuous</span></div>
        <div class="row"><span class="c-name"><i class="ind"></i>plantap</span><span class="c-chk"></span><span class="c-on"><svg class="bulb"><use href="#s-bulb"/></svg></span><span class="c-lock"><svg class="lock"><use href="#s-lock"/></svg></span><span class="c-col"><i class="sw sw-r"></i></span><span class="c-mat"><i class="mc"></i></span><span class="c-lt">Continuous</span></div>
        <div class="row"><span class="c-name"><i class="ind"></i>polylines</span><span class="c-chk"></span><span class="c-on"><svg class="bulb"><use href="#s-bulb"/></svg></span><span class="c-lock"><svg class="lock"><use href="#s-lock"/></svg></span><span class="c-col"><i class="sw sw-b"></i></span><span class="c-mat"><i class="mc mc-pl"></i>Plastic</span><span class="c-lt">Continuous</span></div>
        <div class="row"><span class="c-name"><i class="ind"></i>coberturas</span><span class="c-chk"></span><span class="c-on"><svg class="bulb"><use href="#s-bulb"/></svg></span><span class="c-lock"><svg class="lock"><use href="#s-lock"/></svg></span><span class="c-col"><i class="sw sw-p"></i></span><span class="c-mat"><i class="mc mc-bk"></i>Glass</span><span class="c-lt">Continuous</span></div>
        <div class="row"><span class="c-name"><i class="ind"></i>piso</span><span class="c-chk"></span><span class="c-on"><svg class="bulb"><use href="#s-bulb"/></svg></span><span class="c-lock"><svg class="lock"><use href="#s-lock"/></svg></span><span class="c-col"><i class="sw sw-k"></i></span><span class="c-mat"><i class="mc mc-bk"></i>Gem</span><span class="c-lt">Continuous</span></div>
        <div class="row"><span class="c-name"><i class="ind"></i>Cortes</span><span class="c-chk"></span><span class="c-on"><svg class="bulb"><use href="#s-bulb"/></svg></span><span class="c-lock"><svg class="lock"><use href="#s-lock"/></svg></span><span class="c-col"><i class="sw sw-k"></i></span><span class="c-mat"><i class="mc"></i></span><span class="c-lt">Continuous</span></div>
        <div class="row"><span class="c-name"><i class="ind"></i>borda</span><span class="c-chk"></span><span class="c-on"><svg class="bulb"><use href="#s-bulb"/></svg></span><span class="c-lock"><svg class="lock"><use href="#s-lock"/></svg></span><span class="c-col"><i class="sw sw-w"></i></span><span class="c-mat"><i class="mc"></i></span><span class="c-lt">Continuous</span></div>
        <div class="row"><span class="c-name"><i class="ind ind-ar"></i>ClippingPlane_00</span><span class="c-chk"></span><span class="c-on"><svg class="bulb"><use href="#s-bulb"/></svg></span><span class="c-lock"><svg class="lock"><use href="#s-lock"/></svg></span><span class="c-col"><i class="sw sw-k"></i></span><span class="c-mat"><i class="mc"></i></span><span class="c-lt">Continuous</span></div>
        <div class="row"><span class="c-name"><i class="ind ind-ar"></i>ClippingPlane_01</span><span class="c-chk"></span><span class="c-on"><svg class="bulb"><use href="#s-bulb"/></svg></span><span class="c-lock"><svg class="lock"><use href="#s-lock"/></svg></span><span class="c-col"><i class="sw sw-k"></i></span><span class="c-mat"><i class="mc"></i></span><span class="c-lt">Continuous</span></div>
        <div class="row"><span class="c-name"><i class="ind ind-ar"></i>ClippingPlane_02</span><span class="c-chk"></span><span class="c-on"><svg class="bulb"><use href="#s-bulb"/></svg></span><span class="c-lock"><svg class="lock"><use href="#s-lock"/></svg></span><span class="c-col"><i class="sw sw-k"></i></span><span class="c-mat"><i class="mc"></i></span><span class="c-lt">Continuous</span></div>
        <div class="row"><span class="c-name"><i class="ind ind-ar"></i>ClippingPlane_03</span><span class="c-chk"></span><span class="c-on"><svg class="bulb"><use href="#s-bulb"/></svg></span><span class="c-lock"><svg class="lock"><use href="#s-lock"/></svg></span><span class="c-col"><i class="sw sw-k"></i></span><span class="c-mat"><i class="mc"></i></span><span class="c-lt">Continuous</span></div>
        <div class="row row-cur"><span class="c-name"><i class="ind"></i>paredesh</span><span class="c-chk"><svg class="tick"><use href="#s-tick"/></svg></span><span class="c-on"></span><span class="c-lock"></span><span class="c-col"><i class="sw sw-cur"></i></span><span class="c-mat"><i class="mc mc-mt"></i>Metal</span><span class="c-lt">Continuous</span></div>
        <div class="lay-fill"><i class="hscroll"></i></div>
      </div>
    </div>
    <div class="sidetabs">
      <span class="st st-on"><svg class="st-ic"><use href="#s-layer"/></svg></span>
      <span class="st"><svg class="st-ic"><use href="#s-wheel"/></svg></span>
      <span class="st"><svg class="st-ic"><use href="#s-mon"/></svg></span>
      <span class="st"><svg class="st-ic"><use href="#s-hwin"/></svg></span>
      <span class="st"><svg class="st-ic"><use href="#s-lnote"/></svg></span>
    </div>
  </aside>
</main>

<footer class="status">
  <svg class="st-toggle"><use href="#s-toggle"/></svg>
  <span class="s s-cplane">CPlane</span>
  <span class="s s-x">x 2087.980</span>
  <span class="s s-y">y 736.790</span>
  <span class="s s-z">z 0</span>
  <span class="s s-unit">Meters</span>
  <span class="s s-layer"><i class="st-sw"></i>paredesh</span>
  <span class="s s-grid">Grid Snap</span>
  <span class="s s-ortho">Ortho</span>
  <span class="s s-planar">Planar</span>
  <span class="chip chip-o">Osnap</span>
  <span class="chip chip-s">SmartTrack</span>
  <span class="s s-gum">Gumball (CPlane)</span>
  <svg class="padlock"><use href="#s-padlock"/></svg>
  <span class="s s-auto">Auto CPlane (Object)</span>
  <span class="s s-rec">Record History</span>
  <span class="chip chip-f">Filter</span>
  <span class="s s-cpu">CPU use: 0.0 %</span>
  <svg class="st-toggle st-toggle-r"><use href="#s-toggle2"/></svg>
</footer>
</body>
</html>
```
FILE: styles.css
```css
* { box-sizing: border-box; }
html, body { margin: 0; padding: 0; }
body {
  width: 1919px; height: 1019px; overflow: hidden;
  display: flex; flex-direction: column;
  background: #e9eaee; color: #222;
  font: 14px/1.2 "Open Sans", "Noto Sans", sans-serif;
}
svg { display: block; flex: none; }
.sprite { width: 0; height: 0; }
i { font-style: normal; }

/* title + menu */
.titlebar { height: 27px; flex: none; display: flex; align-items: center; padding: 3px 0 0 5px; }
.logo { width: 18px; height: 18px; }
.title { margin-left: 5px; font-size: 14.3px; color: #333; }
.winbtns { margin-left: auto; display: flex; gap: 43px; padding: 0 26px 3px 0; }
.winbtn { width: 14px; height: 14px; }
.menubar { height: 27px; flex: none; display: flex; align-items: center; gap: 17.65px; padding: 0 0 1px 10px; font-size: 14.3px; }

/* command */
.cmd { height: 68px; flex: none; display: flex; }
.grip { width: 13px; flex: none; background: radial-gradient(circle at 50% 50%, #a8a9ae 1.2px, transparent 1.6px) 0 50% / 13px 9px repeat-y; margin: 6px 0; }
.cmd-main { flex: 1; background: #fff; margin-left: 1px; }
.cmd-hist { height: 45px; padding: 1px 0 0 1px; border-bottom: 1px solid #c5c9d8; line-height: 20px; font-size: 14.16px; color: #222; }
.cmd-line { height: 23px; line-height: 22px; padding-left: 1px; font-weight: 700; color: #000; font-size: 14.16px; }
.cmd-scroll { width: 22px; flex: none; background: #fff; display: flex; flex-direction: column; align-items: center; justify-content: flex-end; padding-bottom: 2px; border-left: 1px solid #d6d7db; }
.cmd-ar { width: 10px; height: 10px; }

/* ribbon tabs */
.tabband { height: 27px; flex: none; display: flex; background: #d6d7db; }
.gut { width: 15px; flex: none; background: #e9eaee; }
.tabs { display: flex; align-items: flex-end; flex: 1; gap: 1px; }
.tab { height: 24px; line-height: 25px; padding: 0 12px; color: #6f7078; font-size: 14.07px; border-radius: 7px 7px 0 0; }
.tab-on { background: #e9eaee; color: #333; }
.band-gear { width: 14px; height: 14px; margin: 9px 9px 0 0; }

.iconrow { height: 41px; flex: none; display: flex; }
.tools { display: flex; align-items: center; gap: 3px; padding-left: 3px; }
.tool { width: 32px; height: 32px; }
.sep { width: 1px; height: 34px; background: #cfd2dc; margin: 0 1px; }

.syncrow { flex: none; display: flex; align-items: flex-start; border-top: 3px solid #d6d7db; border-bottom: 5px solid #d6d7db; height: 43px; font-size: 14.1px; }
.syncrow .grip { height: 30px; margin-top: 3px; }
.sync-group { display: flex; align-items: center; height: 35px; padding: 2px 10px 0 6px; border-right: 2px solid #d6d7db; gap: 11px; }
.sync-first { padding-left: 5px; }
.sync-item { display: flex; align-items: center; gap: 6px; color: #333; }
.sync-ic { width: 26px; height: 26px; }

/* main */
.main { flex: 1; min-height: 0; display: flex; background: #d6d7db; }
.leftcol { width: 150px; flex: none; display: flex; flex-direction: column; gap: 2px; padding-left: 2px; background: linear-gradient(90deg, #f3f4f6 2px, #d6d7db 2px); }
.panel { background: #e9eaee; width: 146px; border-radius: 7px 7px 0 0; }
.toolpanel { height: 379px; }
.hgrip { height: 11px; border-bottom: 1px solid #d6d7db; background: radial-gradient(circle, #b4b5ba 1.5px, transparent 1.8px) center / 8px 11px repeat-x; background-clip: content-box; padding: 0 56px; }
.sidegrid { display: grid; grid-template-columns: repeat(4, 35px); grid-auto-rows: 35px; }
.cell { display: flex; align-items: center; justify-content: center; position: relative; }
.fly::after { content: ""; position: absolute; right: 1px; bottom: 1px; width: 7px; height: 7px; background: #777; clip-path: polygon(100% 0, 100% 100%, 0 100%); }
.osnap { flex: 1; }
.osnap-head { height: 24px; display: flex; align-items: center; justify-content: space-between; padding: 0 6px; color: #666; }
.gear { width: 14px; height: 14px; }
.osnap-tabs { height: 25px; display: flex; background: #d6d7db; }
.otab { width: 45px; display: flex; align-items: center; justify-content: center; border-radius: 7px 7px 0 0; }
.otab-on { background: #e9eaee; }
.otab-ic { width: 20px; height: 20px; }
.snaps { list-style: none; margin: 0; padding: 5px 0 0 3px; }
.snaps li { height: 20px; display: flex; align-items: center; gap: 6px; font-size: 14px; color: #333; }
.snaps .snap-gap { margin-top: 21px; }
.cb { width: 16px; height: 16px; background: #fff; border: 1px solid #c5c9d8; display: flex; align-items: center; justify-content: center; }
.cbm { width: 13px; height: 13px; }

/* viewport */
.centre { width: 1401px; flex: none; display: flex; flex-direction: column; }
.viewport { height: 732px; flex: none; position: relative; margin: 1px 4px 0 3px; background: #9ba1a9; overflow: hidden; }
.scene { width: 100%; height: 100%; }
.scene path, .scene ellipse, .scene circle { vector-effect: non-scaling-stroke; stroke-linejoin: round; }
.wire { fill: none; stroke: #111; stroke-width: 1.3; }
.out { fill: #cfd1d1; stroke: #111; stroke-width: 1.6; }
.floor { fill: url(#fl); stroke: #000; stroke-width: 2.6; }
.floor-in { fill: none; stroke: #8d8d8d; stroke-width: 2; }
.floor-edge { fill: none; stroke: #000; stroke-width: 2; }
.b { fill: #1e78e1; fill-opacity: .73; stroke: #1e90ff; stroke-width: 2; }
.p { fill: #8700e1; fill-opacity: .72; stroke: #9a00ff; stroke-width: 2; }
.pd { fill: #7000d0; fill-opacity: .5; stroke: #9000f0; stroke-width: 1.5; }
.r { fill: #c31919; fill-opacity: .75; stroke: #f00000; stroke-width: 2; }
.rd { fill: #c80f0f; fill-opacity: .85; stroke: #f00000; stroke-width: 1.8; }
.cyl-r { fill: #cf4a4a; stroke: #9a00ff; stroke-width: 2.2; }
.dk { fill: #5a2a30; fill-opacity: .85; stroke: none; }
.bk { fill: #3c2238; fill-opacity: .65; stroke: none; }
.lr { fill: none; stroke: #e80808; stroke-width: 1.3; }
.lrd { fill: none; stroke: #a8364a; stroke-width: 1.2; }
.lb { fill: none; stroke: #1a88f5; stroke-width: 1.3; }
.lp { fill: none; stroke: #8f00f0; stroke-width: 1.3; }
.lk { fill: none; stroke: #223; stroke-width: 1; }
.vp-tab { position: absolute; left: 0; top: 0; height: 22px; width: 113px; display: flex; align-items: center; background: #6fa3f7; padding-left: 10px; border-radius: 2px 2px 0 0; }
.vp-name { font-weight: 700; font-size: 13.6px; color: #1a2433; width: 90px; border-right: 1px solid #1a2433; line-height: 22px; }
.vp-caret { width: 9px; height: 5px; fill: #123; margin-left: 2px; }
.axes { position: absolute; left: 38px; top: 667px; width: 60px; height: 66px; fill: none; stroke: #5a5e64; stroke-width: 1.2; }
.ax { position: absolute; color: #50545a; font-size: 15px; line-height: 16px; }
.ax-z { left: 47px; top: 659px; }
.ax-y { left: 84px; top: 674px; }
.ax-x { left: 47px; top: 709px; }
.tooltip { position: absolute; left: 1210px; top: 367px; height: 24px; width: 153px; background: #000; color: #fff; border-radius: 8px; font: 16px/24px "Liberation Sans", Arial, sans-serif; text-align: center; }
.vptabs { flex: 1; display: flex; align-items: flex-start; padding-left: 2px; }
.vpt { height: 25px; line-height: 24px; padding: 0 11px; color: #6f7078; font-size: 14px; margin-top: 1px; }
.vpt-on { background: #e9eaee; color: #333; border-radius: 0 0 7px 7px; border: 1px solid #d2d6e2; border-top: 0; padding: 0 11px 0 13px; }
.vpt-plus { width: 12px; height: 12px; margin: 8px 0 0 13px; }

/* layers */
.rightcol { flex: 1; display: flex; min-width: 0; }
.layers { width: 337px; flex: none; display: flex; flex-direction: column; background: #e9eaee; }
.lay-head { height: 23px; flex: none; display: flex; align-items: center; justify-content: space-between; padding: 0 6px; color: #666; margin-right: -30px; position: relative; }
.lay-tools { height: 40px; flex: none; display: flex; align-items: center; gap: 7.3px; padding-left: 3px; border-top: 1px solid #e0e1e5; }
.lt { width: 20px; height: 20px; }
.lay-search { height: 27px; flex: none; margin: 3px 0 0 1px; background: #fff; border: 1px solid #c9cddc; border-radius: 14px; display: flex; align-items: center; gap: 2px; padding-left: 6px; color: #777; }
.search-ic { width: 15px; height: 15px; }
.lay-table { flex: 1; min-height: 0; margin-top: 9px; background: #fff; display: flex; flex-direction: column; }
.row { height: 23px; flex: none; display: grid; grid-template-columns: 99px 25px 25px 25px 25px 100px 38px; align-items: center; border-bottom: 1px dotted #d4d5d9; font-size: 14px; color: #333; white-space: nowrap; }
.row > span { overflow: hidden; height: 22px; display: flex; align-items: center; }
.head { height: 28px; background: #f1f2f5; border-bottom: 1px solid #e0e1e5; }
.row.head > span { height: 27px; border-right: 1px solid #dcdde3; padding-left: 6px; }
.row.head .c-mat { padding-left: 8px; }
.c-lt { padding-left: 2px; }
.row.head .c-lt { padding-left: 7px; border-right: 0; }
.c-name { padding-left: 6px; }
.ind { width: 15px; flex: none; display: block; }
.ind-ar { width: 6px; height: 11px; margin: 0 9px 0 0; flex: none; background: #888; clip-path: polygon(0 0, 100% 50%, 0 100%, 0 85%, 75% 50%, 0 15%); }
.row > .c-on, .row > .c-lock, .row > .c-chk { justify-content: center; }
.bulb { width: 18px; height: 18px; }
.lock { width: 17px; height: 17px; }
.tick { width: 16px; height: 16px; }
.c-col { padding-left: 5px; }
.sw { width: 18px; height: 18px; border: 1px solid #333; display: block; }
.sw-k { background: #000; }
.sw-r { background: #ff0037; }
.sw-b { background: #1e8fff; }
.sw-p { background: #9a00ff; }
.sw-w { background: #fff; }
.sw-cur { background: #e01010; }
.c-mat { gap: 5px; padding-left: 3px; }
.mc { width: 16px; height: 16px; border-radius: 50%; border: 1px solid #555; background: #fff; display: block; flex: none; }
.mc-pl { background: radial-gradient(circle at 40% 30%, #fff, #999 65%, #444); }
.mc-bk { background: radial-gradient(circle at 40% 25%, #555, #111 55%, #000); }
.mc-mt { background: radial-gradient(circle at 50% 20%, #ddd, #222 50%, #666); }
.row-cur { font-weight: 700; color: #222; }
.lay-fill { flex: 1; display: flex; align-items: flex-end; padding: 0 0 5px 10px; }
.hscroll { display: block; width: 152px; height: 10px; border-radius: 5px; background: #c4c4c4; }
.sidetabs { flex: 1; display: flex; flex-direction: column; align-items: center; background: #d6d7db; }
.st { height: 46px; width: 100%; display: flex; align-items: center; justify-content: center; }
.st-on { background: #e9eaee; height: 68px; padding-top: 22px; border-radius: 0 0 7px 0; }
.st-ic { width: 20px; height: 20px; }

/* status bar */
.status { height: 27px; flex: none; display: grid; grid-template-columns: 52px 87px 111px 128px 102px 90px 249px 89px 64px 55px 64px 3px 99px 17px 139px 24px 169px 114px 55px 17px 166px 1fr; align-items: center; color: #333; font-size: 14px; white-space: nowrap; }
.st-toggle { width: 17px; height: 17px; margin-left: 10px; }
.s { display: flex; align-items: center; gap: 8px; }
.st-sw { display: block; width: 20px; height: 20px; background: #e01010; border: 1px solid #222; }
.chip { height: 24px; line-height: 24px; text-align: center; background: #d1daec; font-weight: 700; border-radius: 2px; color: #222; }
.chip-o { grid-column: 11; }
.chip-s { grid-column: 13; }
.s-gum { grid-column: 14 / span 2; padding-left: 17px; }
.padlock { grid-column: 16; width: 16px; height: 16px; }
.s-auto { grid-column: 17; padding-left: 1px; }
.s-rec { grid-column: 18; }
.chip-f { grid-column: 19; }
.s-cpu { grid-column: 20 / span 2; padding-left: 17px; }
.st-toggle-r { grid-column: 22; margin-left: auto; margin-right: 8px; }
```
